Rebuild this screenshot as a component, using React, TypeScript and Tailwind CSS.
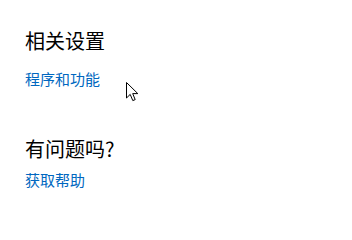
import React from "react";

function Cursor() {
    return (
        <svg width="13" height="20" viewBox="0 0 13 20" className="absolute left-[126px] top-[82px]">
            <path
                d="M0.5 0.5 L0.5 16 L4.2 12.4 L6.8 18.6 L9.2 17.6 L6.7 11.6 L11.8 11.6 Z"
                fill="#fff"
                stroke="#000"
                strokeWidth="1"
                strokeLinejoin="miter"
            />
        </svg>
    );
}

export default function App() {
    return (
        <div
            className="relative w-[352px] h-[220px] bg-white pl-[25px] pt-[28px]"
            style={{ fontFamily: '"Microsoft YaHei", "Noto Sans CJK SC", sans-serif' }}
        >
            <h2 className="text-[20px] leading-[26px] text-[#000] font-normal">相关设置</h2>
            <a className="block mt-[15px] text-[15px] leading-[20px] text-[#0067c0]">程序和功能</a>

            <h2 className="mt-[47px] text-[20px] leading-[26px] text-[#000] font-normal">有问题吗?</h2>
            <a className="block mt-[8px] text-[15px] leading-[20px] text-[#0067c0]">获取帮助</a>

            <Cursor />
        </div>
    );
}
